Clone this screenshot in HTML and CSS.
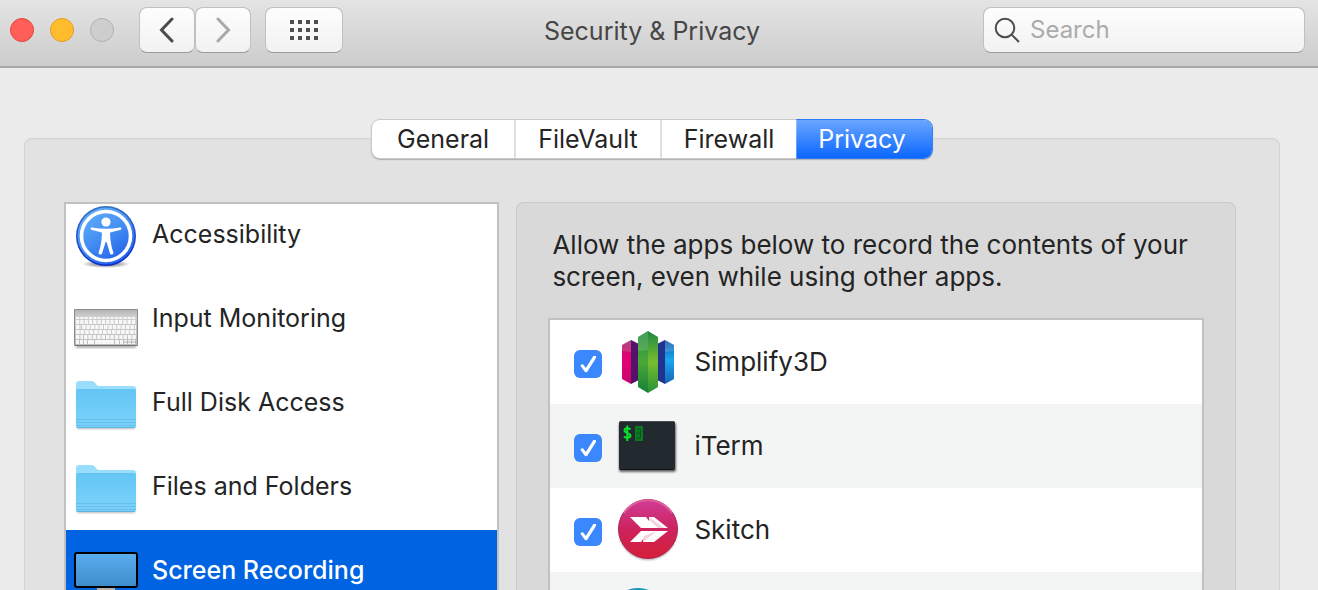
FILE: index.html
```html
<!DOCTYPE html>
<html lang="en">
<head>
<meta charset="utf-8">
<title>Security &amp; Privacy</title>
<link rel="stylesheet" href="styles.css">
</head>
<body>
<header class="titlebar">
  <div class="controls">
    <div class="lights">
      <button class="light light-close" aria-label="Close"></button>
      <button class="light light-min" aria-label="Minimize"></button>
      <button class="light light-zoom" aria-label="Zoom" disabled></button>
    </div>
    <div class="nav">
      <button class="tool" aria-label="Back"><svg width="16" height="26" viewBox="0 0 16 26"><path d="M13 2 2.500 13 13 24" fill="none" stroke="#4b4b4b" stroke-width="3" stroke-linecap="round"/></svg></button>
      <button class="tool" aria-label="Forward"><svg width="16" height="26" viewBox="0 0 16 26"><path d="M3 2 13.500 13 3 24" fill="none" stroke="#a9a9a9" stroke-width="3" stroke-linecap="round"/></svg></button>
    </div>
    <button class="tool tool-grid" aria-label="Show all"><svg width="28" height="20" viewBox="0 0 28 20" fill="#4f4f4f"><path d="M0 0h4v4H0zM8 0h4v4H8zM16 0h4v4h-4zM24 0h4v4h-4zM0 8h4v4H0zM8 8h4v4H8zM16 8h4v4h-4zM24 8h4v4h-4zM0 16h4v4H0zM8 16h4v4H8zM16 16h4v4h-4zM24 16h4v4h-4z"/></svg></button>
  </div>
  <h1 class="title">Security &amp; Privacy</h1>
  <label class="search">
    <svg width="28" height="28" viewBox="0 0 28 28"><g fill="none" stroke="#4d4d4d" stroke-width="2"><circle cx="12" cy="12" r="9.300"/><path d="m18.600 18.600 7.400 7.400"/></g></svg>
    <input class="search-input" type="search" placeholder="Search" aria-label="Search">
  </label>
</header>
<main class="content">
  <nav class="tabs" aria-label="Sections">
    <button class="tab">General</button>
    <button class="tab">FileVault</button>
    <button class="tab">Firewall</button>
    <button class="tab tab-active">Privacy</button>
  </nav>
  <section class="pane">
    <div class="sidebar">
      <ul class="categories">
        <li><button class="category">
          <svg class="icon" viewBox="0 0 64 64">
            <defs>
              <linearGradient id="blue" x1="0" y1="0" x2=".6" y2="1"><stop offset="0" stop-color="#68b4fb"/><stop offset=".55" stop-color="#4590f3"/><stop offset="1" stop-color="#2563ea"/></linearGradient>
              <linearGradient id="ring" x1="0" y1="0" x2="0" y2="1"><stop offset="0" stop-color="#346fbd"/><stop offset="1" stop-color="#0929cf"/></linearGradient>
              <radialGradient id="shade"><stop offset="0" stop-color="#000" stop-opacity=".7"/><stop offset="1" stop-color="#000" stop-opacity="0"/></radialGradient>
            </defs>
            <ellipse cx="32" cy="60" rx="24" ry="4" fill="url(#shade)"/>
            <circle cx="32" cy="32" r="30" fill="url(#ring)"/>
            <circle cx="32" cy="32" r="28.500" fill="url(#blue)"/>
            <circle cx="32" cy="32" r="24.500" fill="none" stroke="#fff" stroke-width="3.600"/>
            <circle cx="32" cy="18" r="4.600" fill="#fff"/>
            <path d="M18 23.500c-2-.4-1.600 2.300 0 2.600l9 2.200c1 .3 1 1 .9 2.500-.3 6.500-1.300 12.500-3.200 17.400-.8 2.200 2.400 3.200 3.300 1.200L31.600 38h1L36 49.400c.9 2 4.100 1 3.300-1.200-1.900-4.900-2.900-10.900-3.200-17.400-.1-1.500-.1-2.200.9-2.500l9-2.200c1.600-.3 2-3 0-2.600-9.500 1.700-18.500 1.700-28 0z" fill="#fff"/>
          </svg>
          <span class="label">Accessibility</span></button></li>
        <li><button class="category">
          <svg class="icon" viewBox="0 0 64 64">
            <defs>
              <linearGradient id="alu" x1="0" y1="0" x2="0" y2="1"><stop offset="0" stop-color="#b4b4b4"/><stop offset=".2" stop-color="#cecece"/><stop offset="1" stop-color="#bdbdbd"/></linearGradient>
              <filter id="soft"><feGaussianBlur stdDeviation="1"/></filter>
            </defs>
            <path d="M2 57h60v3H2z" fill="#777" opacity=".6" filter="url(#soft)"/>
            <path d="M.5 21.500h63v36H.5z" fill="url(#alu)" stroke="#8c8c8c"/>
            <path d="M1 57.500h62" stroke="#717171"/>
            <g fill="none" stroke="#f7f7f7">
              <path d="M2 30h60" stroke-width="2" stroke-dasharray="3.300 1"/>
              <path d="M2 34h60" stroke-width="4" stroke-dasharray="3.300 1"/>
              <path d="M2 39h5m1 0h54" stroke-width="4" stroke-dasharray="3.500 .9"/>
              <path d="M2 44h60" stroke-width="4" stroke-dasharray="3.700 .8"/>
              <path d="M2 49h7m1 0h52" stroke-width="4" stroke-dasharray="3.400 1"/>
              <path d="M2 54h3m1 0h3m1 0h3m1 0h6m1 0h19m1 0h4m1 0h3m1 0h3m1 0h3m1 0h3" stroke-width="4"/>
            </g>
            <path d="M50 54h12" stroke="#aaa"/>
          </svg>
          <span class="label">Input Monitoring</span></button></li>
        <li><button class="category">
          <svg class="icon" viewBox="0 0 64 64">
            <defs><linearGradient id="folder" x1="0" y1="0" x2="0" y2="1"><stop offset="0" stop-color="#64c5f4"/><stop offset="1" stop-color="#7bd3fb"/></linearGradient></defs>
            <path d="M3 20h58v35.500a1.500 1.500 0 0 1-1.500 1.500h-55A1.500 1.500 0 0 1 3 55.500z" fill="#777" opacity=".5" filter="url(#soft)"/>
            <path d="M2 12q0-3 3-3h13c3 0 4 5 7 5h34q3 0 3 3v10H2z" fill="#9adefd"/>
            <path d="M2 19q0-2 2-2h56q2 0 2 2v34q0 3-2 3H4q-2 0-2-3z" fill="url(#folder)"/>
            <path d="M2 47.500h60M2 50.500h60M2 53.500h60" stroke="#68bfe9"/>
            <path d="M3 55.500h58" stroke="#60b3dc"/>
          </svg>
          <span class="label">Full Disk Access</span></button></li>
        <li><button class="category">
          <svg class="icon" viewBox="0 0 64 64">
            <path d="M3 20h58v35.500a1.500 1.500 0 0 1-1.500 1.500h-55A1.500 1.500 0 0 1 3 55.500z" fill="#777" opacity=".5" filter="url(#soft)"/>
            <path d="M2 12q0-3 3-3h13c3 0 4 5 7 5h34q3 0 3 3v10H2z" fill="#9adefd"/>
            <path d="M2 19q0-2 2-2h56q2 0 2 2v34q0 3-2 3H4q-2 0-2-3z" fill="url(#folder)"/>
            <path d="M2 47.500h60M2 50.500h60M2 53.500h60" stroke="#68bfe9"/>
            <path d="M3 55.500h58" stroke="#60b3dc"/>
          </svg>
          <span class="label">Files and Folders</span></button></li>
        <li><button class="category category-active" aria-current="true">
          <svg class="icon" viewBox="0 0 64 64">
            <defs><linearGradient id="screen" x1="0" y1="0" x2="0" y2="1"><stop offset="0" stop-color="#5aaeef"/><stop offset="1" stop-color="#3e8bcb"/></linearGradient></defs>
            <path d="M23 47h18v7H23z" fill="#b5b5b5"/>
            <rect x="1" y="13" width="62" height="34" rx="2" fill="url(#screen)" stroke="#000" stroke-width="2"/>
          </svg>
          <span class="label">Screen Recording</span></button></li>
      </ul>
    </div>
    <div class="detail">
      <p class="intro">Allow the apps below to record the contents of your screen, even while using other apps.</p>
      <ul class="apps">
        <li><label class="app"><input class="check" type="checkbox" checked>
          <svg class="icon" viewBox="0 0 64 64">
            <defs>
              <linearGradient id="pink" x1="0" y1="0" x2="0" y2="1"><stop offset="0" stop-color="#9f2468"/><stop offset=".4" stop-color="#e60074"/><stop offset="1" stop-color="#c6086b"/></linearGradient>
              <linearGradient id="cyan" x1="0" y1="0" x2="0" y2="1"><stop offset="0" stop-color="#1555a9"/><stop offset=".45" stop-color="#1ba6ed"/><stop offset="1" stop-color="#1564b7"/></linearGradient>
              <linearGradient id="green" x1="0" y1="0" x2="0" y2="1"><stop offset="0" stop-color="#1d8840"/><stop offset=".5" stop-color="#79bd30"/><stop offset="1" stop-color="#279036"/></linearGradient>
              <linearGradient id="leaf" x1="0" y1="0" x2="0" y2="1"><stop offset="0" stop-color="#238d42"/><stop offset=".5" stop-color="#4aa838"/><stop offset="1" stop-color="#168238"/></linearGradient>
            </defs>
            <path d="m6 15 9-5v44l-9-5z" fill="url(#pink)"/><path d="m15 10 8 4v36l-8 4z" fill="#551269"/>
            <path d="m41 14 8-4v44l-8-4z" fill="#20338e"/><path d="m49 10 9 5v34l-9 5z" fill="url(#cyan)"/>
            <path d="m22 7 10-6v62l-10-6z" fill="url(#leaf)"/><path d="m32 1 10 6v50l-10 6z" fill="url(#green)"/>
            <path d="m6 15 9-5v12l-9-1zM22 7l10-6v19l-10 1zM49 10l9 5v6l-9 1z" fill="#fff" opacity=".14"/>
          </svg><span>Simplify3D</span></label></li>
        <li><label class="app"><input class="check" type="checkbox" checked>
          <svg class="icon" viewBox="0 0 64 64">
            <rect x="3" y="9" width="57" height="49" rx="2" fill="#000" opacity=".6" filter="url(#soft)"/>
            <rect x="3" y="7" width="56" height="49" rx="2" fill="#222a2f"/>
            <path d="M4 7.500h54" stroke="#444c51"/>
            <path d="M4 55.500h54" stroke="#101416"/>
            <path d="M14.500 15.500c-1.500-1.700-6-1.700-6 1s6 2.500 6 5-4.500 3-6.500 1M11.300 11.500v15.500" fill="none" stroke="#0be02a" stroke-width="2"/>
            <path d="M19 12h8v15h-8z" fill="#087a20"/>
            <path d="M20.500 15h4v9h-4m0-5h4" fill="none" stroke="#144d24"/>
          </svg><span>iTerm</span></label></li>
        <li><label class="app"><input class="check" type="checkbox" checked>
          <svg class="icon" viewBox="0 0 64 64">
            <defs><linearGradient id="skitch" x1="0" y1="0" x2="0" y2="1"><stop offset="0" stop-color="#cf3c97"/><stop offset=".5" stop-color="#cd235e"/><stop offset="1" stop-color="#d51e37"/></linearGradient></defs>
            <circle cx="32" cy="33" r="29" fill="#555" opacity=".5" filter="url(#soft)"/>
            <circle cx="32" cy="31" r="29.500" fill="url(#skitch)" stroke="#b62354"/>
            <path d="M8 15a29 29 0 0 1 48 0" fill="none" stroke="#ed78b4" stroke-width="2" opacity=".6"/>
            <path d="M14 19h16l3 4v-4h5l14 11H25zM14 44l11-11h27L38 44H27l1-4-3 4z" fill="#fff"/>
            <path d="M33 19v3l9 8h6zM27 44l1-6 13-5z" fill="#f3d3de"/>
          </svg><span>Skitch</span></label></li>
        <li><label class="app"><input class="check" type="checkbox" checked aria-label="App">
          <svg class="icon" viewBox="0 0 64 64"><circle cx="22" cy="36" r="30" fill="#1796b5"/></svg></label></li>
      </ul>
    </div>
  </section>
</main>
</body>
</html>
```
FILE: styles.css
```css
* { box-sizing: border-box; }
body {
  margin: 0;
  height: 100vh;
  overflow: hidden;
  display: flex;
  flex-direction: column;
  background: #ebebeb;
  color: #242424;
  font: 25px/32px Inter, "Liberation Sans", sans-serif;
}
button, input { font: inherit; color: inherit; margin: 0; }
button { border: 0; background: none; padding: 0; }
ul { list-style: none; margin: 0; padding: 0; }
svg { display: block; flex: none; }

.titlebar {
  flex: none;
  height: 68px;
  padding: 7px 13px 0 10px;
  display: flex;
  align-items: flex-start;
  background: linear-gradient(#e4e4e4, #cccccc);
  border-bottom: 2px solid #a9a9a9;
}
.controls { display: flex; align-items: center; }
.lights { display: flex; gap: 16px; margin-right: 25px; }
.light { width: 24px; height: 24px; border-radius: 50%; border: 1px solid; }
.light-close { background: #ff5f58; border-color: #e2463f; }
.light-min { background: #ffbd2e; border-color: #e09e20; }
.light-zoom { background: #cecece; border-color: #b0b0b0; }
.nav { display: flex; margin-right: 14px; }
.tool {
  width: 56px;
  height: 46px;
  display: flex;
  align-items: center;
  justify-content: center;
  background: linear-gradient(#fdfdfd, #f2f2f2);
  border: 1px solid #c0c0c0;
  border-bottom-color: #9c9c9c;
  border-radius: 8px;
}
.tool-grid { width: 78px; }
.title {
  flex: 1;
  margin: 0;
  padding: 8px 22px 0 0;
  text-align: center;
  font-size: 25px;
  font-weight: 400;
  color: #464646;
}
.search {
  width: 322px;
  height: 46px;
  display: flex;
  align-items: center;
  gap: 9px;
  padding: 0 9px;
  background: linear-gradient(#fdfdfd, #f2f2f2);
  border: 1px solid #c0c0c0;
  border-bottom-color: #9c9c9c;
  border-radius: 8px;
}
.search-input {
  flex: 1;
  min-width: 0;
  padding: 0;
  border: 0;
  outline: 0;
  background: none;
  font-size: 24px;
}
.search-input::placeholder { color: #ababab; }

.content {
  flex: 1;
  min-height: 0;
  display: flex;
  flex-direction: column;
  padding: 52px 38px 0 24px;
}
.tabs {
  z-index: 1;
  align-self: center;
  display: flex;
  height: 38px;
  margin-bottom: -20px;
  background: #fff;
  border-radius: 8px;
  box-shadow: 0 0 0 1px #c9c9c9, 0 1px 1px 1px #b0b0b0;
}
.tab { padding: 0 22px; border-left: 2px solid #e0e0e0; }
.tab:first-child { padding: 0 25px; border-left: 0; }
.tab-active {
  border-left: 0;
  padding: 0 26px 0 22px;
  color: #fff;
  background: linear-gradient(#6ba6ff, #0a66ff);
  box-shadow: 0 0 0 1px #2f7bf5;
  clip-path: inset(-1px -1px -1px 0 round 0 8px 8px 0);
  border-radius: 0 8px 8px 0;
}
.pane {
  flex: 1;
  min-height: 0;
  display: flex;
  gap: 17px;
  padding: 63px 43px 0 39px;
  background: #e2e2e2;
  border: 1px solid #d2d2d2;
  border-bottom: 0;
  border-radius: 8px 8px 0 0;
}
.sidebar {
  flex: none;
  width: 37.15%;
  overflow: hidden;
  background: #fff;
  border: 2px solid #c1c1c1;
  border-bottom: 0;
}
.categories { margin-top: -10px; }
.category {
  width: 100%;
  height: 84px;
  display: flex;
  align-items: center;
  gap: 14px;
  padding: 0 8px;
  text-align: left;
}
.category-active { background: #0063e1; color: #fff; font-weight: 500; }
.icon { width: 64px; height: 64px; }
.label { padding-bottom: 4px; }
.detail {
  flex: 1;
  min-width: 0;
  display: flex;
  flex-direction: column;
  overflow: hidden;
  padding: 26px 31px 0;
  background: #d9d9d9;
  border: 1px solid #cacaca;
  border-bottom: 0;
  border-radius: 8px 8px 0 0;
}
.intro { margin: 0 0 25px; padding-left: 4px; }
.apps {
  flex: 1;
  min-height: 0;
  overflow: hidden;
  background: #fff;
  border: 2px solid #c1c1c1;
  border-bottom: 0;
}
.apps li:nth-child(even) { background: #f3f5f4; }
.app { height: 84px; display: flex; align-items: center; gap: 14px; padding-left: 24px; }
.intro, .app { font-size: 26px; }
.check {
  appearance: none;
  flex: none;
  width: 28px;
  height: 28px;
  margin-top: 4px;
  border-radius: 6px;
  background: #3b87fd;
  display: grid;
  place-items: center;
}
.check:checked::before {
  content: "";
  width: 16px;
  height: 17px;
  background: #fff;
  clip-path: polygon(0 60%, 8% 51%, 18% 53%, 34% 74%, 82% 2%, 94% 0, 100% 11%, 42% 97%, 30% 98%);
}
```
